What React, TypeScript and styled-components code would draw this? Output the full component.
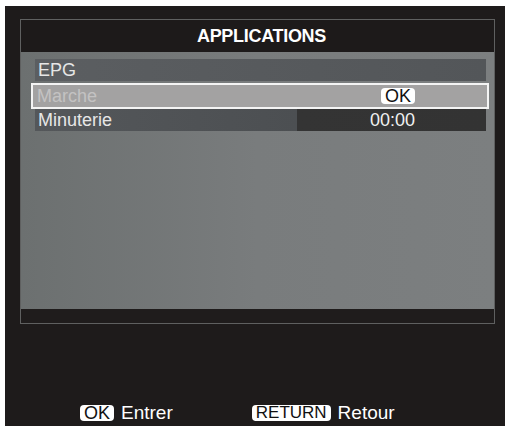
import React from "react";
import styled, { createGlobalStyle } from "styled-components";

const GlobalStyle = createGlobalStyle`
  html, body {
    margin: 0;
    padding: 0;
    background: #ffffff;
    font-family: "Liberation Sans", Arial, sans-serif;
  }
`;

const Screen = styled.div`
  width: 514px;
  height: 426px;
  padding: 6px 9px 0 5px;
  box-sizing: border-box;
  background: #ffffff;
`;

const Frame = styled.div`
  height: 100%;
  background: #1e1b1b;
  padding: 13px 10px 0 15px;
  box-sizing: border-box;
  display: flex;
  flex-direction: column;
`;

const Panel = styled.div`
  border: 1px solid #5f6060;
  display: flex;
  flex-direction: column;
  height: 305px;
  box-sizing: border-box;
`;

const TitleBar = styled.div`
  height: 32px;
  background: #1d1a1a;
  color: #ffffff;
  font-weight: bold;
  font-size: 18px;
  letter-spacing: -0.3px;
  display: flex;
  align-items: center;
  justify-content: center;
  padding-left: 8px;
`;

const Content = styled.div`
  flex: 1;
  background: linear-gradient(90deg, #6c7070 0%, #797c7d 50%, #7c7f80 100%);
  padding: 7px 8px 0 14px;
  display: flex;
  flex-direction: column;
`;

const Row = styled.div<{ $selected?: boolean; $split?: boolean }>`
  height: ${(p) => (p.$selected ? "26px" : "22px")};
  box-sizing: border-box;
  display: flex;
  align-items: center;
  justify-content: space-between;
  padding: 0 ${(p) => (p.$selected ? "72px" : "71px")} 0 ${(p) => (p.$selected ? "4px" : "3px")};
  margin: ${(p) => (p.$selected ? "2px -3px 0 -4px" : "0")};
  font-size: 18px;
  color: ${(p) => (p.$selected ? "#c3c2c2" : "#e6e6e6")};
  border: ${(p) => (p.$selected ? "2px solid #f4f4f4" : "none")};
  background: ${(p) =>
    p.$selected
      ? "#a3a2a2"
      : p.$split
      ? "linear-gradient(90deg, #54575a 0%, #4c4f52 58%, #343434 58%, #333333 100%)"
      : "linear-gradient(90deg, #5b5e61 0%, #535659 100%)"};
`;

const Value = styled.span`
  color: #f0f0f0;
`;

const Badge = styled.span<{ $size?: number }>`
  display: inline-block;
  background: #ffffff;
  color: #111111;
  border-radius: 4px;
  font-size: ${(p) => p.$size ?? 18}px;
  line-height: 16px;
  padding: 0 4px;
`;

const BottomStrip = styled.div`
  height: 14px;
  background: #1f1c1c;
`;

const Footer = styled.div`
  flex: 1;
  display: flex;
  align-items: flex-end;
  padding: 0 0 2px 60px;
  gap: 79px;
`;

const Hint = styled.div`
  display: flex;
  align-items: center;
  gap: 7px;
  color: #ffffff;
  font-size: 19px;
`;

export default function App() {
  return (
    <>
      <GlobalStyle />
      <Screen>
        <Frame>
          <Panel>
            <TitleBar>APPLICATIONS</TitleBar>
            <Content>
              <Row>EPG</Row>
              <Row $selected>
                <span>Marche</span>
                <Badge>OK</Badge>
              </Row>
              <Row $split>
                <span>Minuterie</span>
                <Value>00:00</Value>
              </Row>
            </Content>
            <BottomStrip />
          </Panel>
          <Footer>
            <Hint>
              <Badge>OK</Badge>
              Entrer
            </Hint>
            <Hint>
              <Badge $size={17}>RETURN</Badge>
              Retour
            </Hint>
          </Footer>
        </Frame>
      </Screen>
    </>
  );
}
